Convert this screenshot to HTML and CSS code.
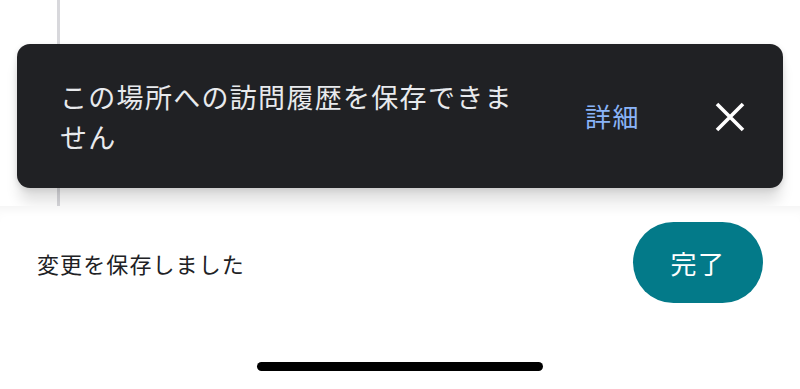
FILE: index.html
```html
<!DOCTYPE html>
<html lang="ja">
<head>
<meta charset="utf-8">
<link rel="stylesheet" href="styles.css">
</head>
<body>
<div class="screen">
  <div class="top">
    <div class="rail"></div>
    <div class="snackbar">
      <p class="snack-text">この場所への訪問履歴を保存できません</p>
      <a class="snack-link">詳細</a>
      <button class="snack-close" aria-label="閉じる">
        <svg width="30" height="30" viewBox="0 0 30 30"><path d="M2 2 L28 28 M28 2 L2 28" stroke="#ffffff" stroke-width="3.6" stroke-linecap="butt" fill="none"/></svg>
      </button>
    </div>
  </div>
  <div class="sheet">
    <div class="sheet-row">
      <span class="sheet-text">変更を保存しました</span>
      <button class="done">完了</button>
    </div>
    <div class="home-bar"></div>
  </div>
</div>
</body>
</html>
```
FILE: styles.css
```css
* { box-sizing: border-box; }
html, body { margin: 0; padding: 0; background: #ffffff; }
body { font-family: "Noto Sans CJK JP", "Noto Sans", sans-serif; overflow: hidden; }
.screen { width: 800px; height: 389px; display: flex; flex-direction: column; }
.top { position: relative; height: 206px; background: #ffffff; }
.rail { position: absolute; left: 57px; top: 0; width: 3px; height: 206px; background: #d8d8dc; }
.snackbar {
  position: absolute; left: 17px; top: 44px; width: 766px; height: 144px;
  background: #202124; border-radius: 13px;
  box-shadow: 0 16px 14px -2px rgba(0,0,0,0.12), 0 2px 6px rgba(0,0,0,0.12);
  display: flex; align-items: center; padding: 0 38px 0 43px;
}
.snack-text {
  margin: 0; width: 475px; color: #e8eaed; font-size: 27px; letter-spacing: 1.3px;
  line-height: 40px; margin-top: 1px;
}
.snack-link {
  margin-left: 50px; color: #8ab4f8; font-size: 26px; letter-spacing: 1.6px; line-height: 40px;
}
.snack-close {
  margin-left: auto; width: 30px; height: 30px; padding: 0; border: 0; background: none;
  display: flex; margin-top: 2px;
}
.sheet {
  position: relative; z-index: 2; flex: 1; background: #ffffff;
  display: flex; flex-direction: column; align-items: center;
  box-shadow: inset 0 10px 12px -8px rgba(0,0,0,0.06);
}
.sheet-row {
  width: 100%; display: flex; align-items: center; justify-content: space-between;
  padding: 16px 37px 0 37px;
}
.sheet-text { color: #202124; font-size: 22px; letter-spacing: 1.1px; margin-top: 1px; }
.done {
  width: 130px; height: 81px; border: 0; border-radius: 41px; background: #037a89;
  color: #ffffff; font-family: inherit; font-size: 26px; letter-spacing: 1.5px; padding: 0;
}
.home-bar { margin-top: 59px; width: 286px; height: 9px; border-radius: 5px; background: #000000; }
```
